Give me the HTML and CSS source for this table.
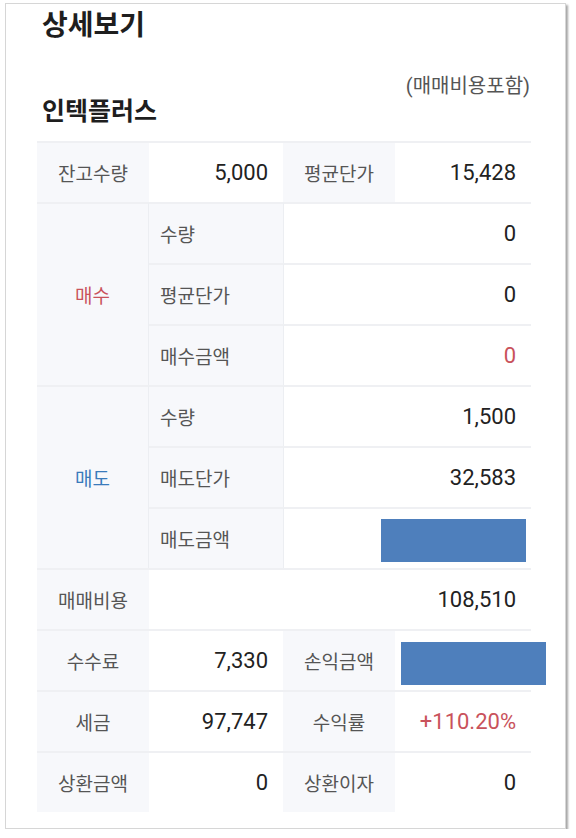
FILE: index.html
```html
<!DOCTYPE html>
<html lang="ko">
<head>
<meta charset="utf-8">
<link rel="stylesheet" href="styles.css">
</head>
<body>
<div class="frame">
  <h1 class="title">상세보기</h1>
  <div class="head">
    <div class="note">(매매비용포함)</div>
    <h2 class="name">인텍플러스</h2>
  </div>
  <div class="grid">
    <div class="cell label">잔고수량</div>
    <div class="cell val">5,000</div>
    <div class="cell label">평균단가</div>
    <div class="cell val">15,428</div>

    <div class="cell label group red">매수</div>
    <div class="cell sub">수량</div>
    <div class="cell val wide2">0</div>
    <div class="cell sub">평균단가</div>
    <div class="cell val wide2">0</div>
    <div class="cell sub">매수금액</div>
    <div class="cell val wide2 red">0</div>

    <div class="cell label group blue">매도</div>
    <div class="cell sub">수량</div>
    <div class="cell val wide2">1,500</div>
    <div class="cell sub">매도단가</div>
    <div class="cell val wide2">32,583</div>
    <div class="cell sub">매도금액</div>
    <div class="cell val wide2"><span class="mask mask-a"></span></div>

    <div class="cell label">매매비용</div>
    <div class="cell val wide3">108,510</div>

    <div class="cell label">수수료</div>
    <div class="cell val">7,330</div>
    <div class="cell label">손익금액</div>
    <div class="cell val"><span class="mask mask-b"></span></div>

    <div class="cell label">세금</div>
    <div class="cell val">97,747</div>
    <div class="cell label">수익률</div>
    <div class="cell val red">+110.20%</div>

    <div class="cell label">상환금액</div>
    <div class="cell val">0</div>
    <div class="cell label">상환이자</div>
    <div class="cell val">0</div>
  </div>
</div>
</body>
</html>
```
FILE: styles.css
```css
* { box-sizing: border-box; }
html, body { margin: 0; padding: 0; background: #fff; }
body {
  font-family: Roboto, "Noto Sans CJK KR", sans-serif;
  color: #222;
}
.frame {
  margin: 3px 0 0 5px;
  width: 561px;
  height: 826px;
  border: 1px solid #d6d6d6;
  box-shadow: 2px 2px 2px rgba(0,0,0,0.35);
  padding: 5px 0 0 31px;
}
.title {
  margin: 0 0 0 5px;
  font-size: 28px;
  line-height: 34px;
  font-weight: 700;
  color: #1e1e1e;
}
.head {
  width: 494px;
  margin-top: 31px;
}
.note {
  text-align: right;
  font-size: 20px;
  line-height: 24px;
  color: #555;
  padding-right: 1px;
}
.name {
  margin: 0 0 0 5px;
  font-size: 25px;
  line-height: 28px;
  font-weight: 700;
  color: #1e1e1e;
}
.grid {
  margin-top: 15px;
  width: 494px;
  display: grid;
  grid-template-columns: 112px 134px 112px 136px;
  grid-auto-rows: 61px;
}
.cell {
  border-top: 2px solid #eff0f3;
  display: flex;
  align-items: center;
  position: relative;
}
.label {
  background: #f7f8fb;
  justify-content: center;
  font-size: 19px;
  color: #555;
}
.group {
  grid-row: span 3;
  border-right: 1px solid #eceef2;
}
.sub {
  background: #f7f8fb;
  justify-content: flex-start;
  padding-left: 11px;
  font-size: 19px;
  color: #555;
}
.val {
  background: #fff;
  justify-content: flex-end;
  padding-right: 15px;
  font-size: 22px;
  color: #222;
}
.wide2 { grid-column: span 2; border-left: 1px solid #eceef2; }
.wide3 { grid-column: span 3; }
.red { color: #c9525b; }
.blue { color: #3a7bbb; }
.mask {
  position: absolute;
  background: #4e7fbc;
  width: 145px;
  height: 43px;
}
.mask-a { right: 5px; top: 10px; }
.mask-b { left: 6px; top: 11px; }
```
